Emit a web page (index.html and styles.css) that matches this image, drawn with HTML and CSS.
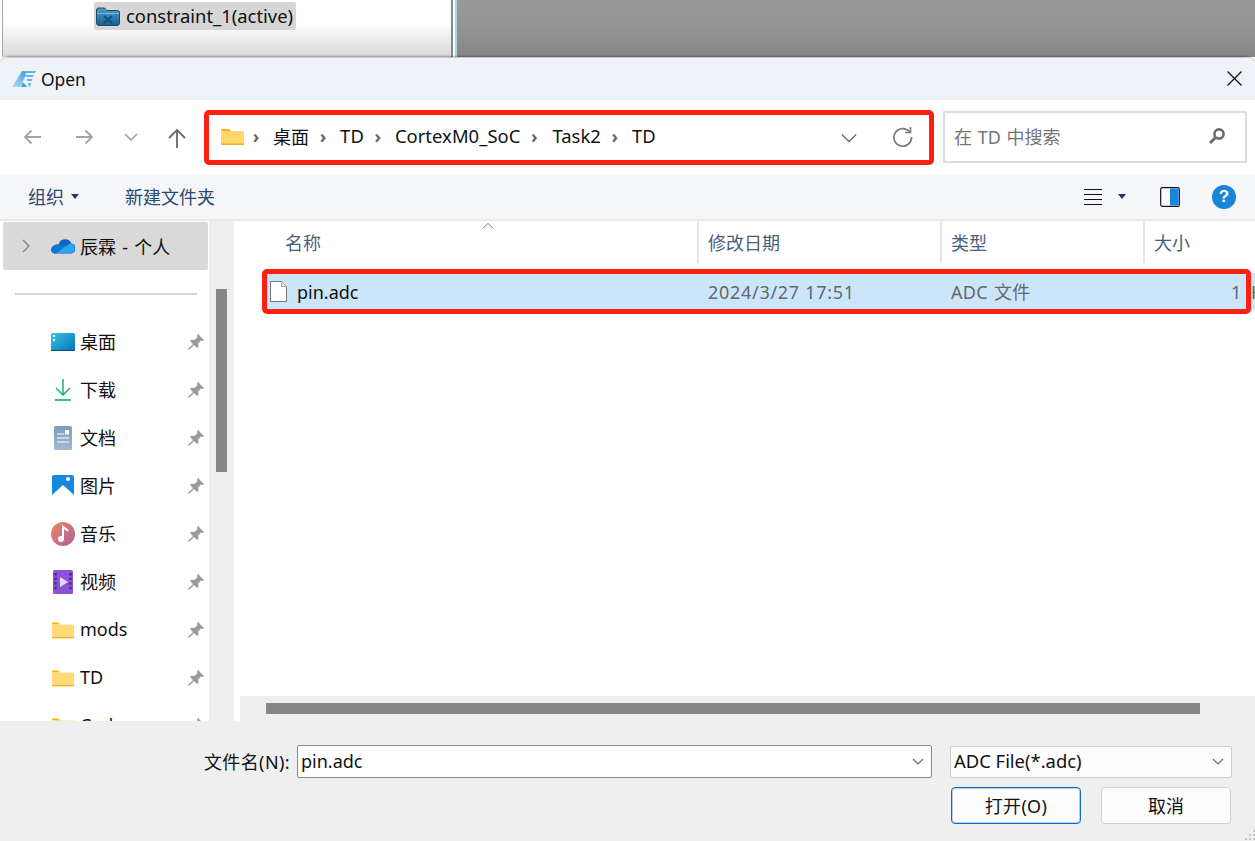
FILE: index.html
```html
<!DOCTYPE html>
<html lang="zh">
<head>
<meta charset="utf-8">
<title>Open</title>
<link rel="stylesheet" href="styles.css">
</head>
<body>
<div class="backdrop">
  <div class="tree">
    <div class="tree-item">
      <svg class="ico-constraint" viewBox="0 0 24 19"><defs><linearGradient id="cg" x1="0" y1="0" x2="0" y2="1"><stop offset="0" stop-color="#4f9ccb"/><stop offset="1" stop-color="#15608f"/></linearGradient></defs><path d="M.5 3a2 2 0 0 1 2-2h6l2.500 2.500h10.500a2 2 0 0 1 2 2V16a2.500 2.500 0 0 1-2.500 2.500H3A2.500 2.500 0 0 1 .5 16z" fill="url(#cg)" stroke="#234a66"/><path d="M1 6.500h22" stroke="#7db9dd"/><path d="M8 9l8 7M16 9l-8 7" stroke="#114f7c" stroke-width="1.800"/></svg>
      <span class="lat">constraint_1(active)</span>
    </div>
  </div>
  <div class="tree-edge"></div>
  <div class="work"></div>
</div>
<div class="dialog">
  <header class="titlebar">
    <svg class="app-logo" viewBox="0 0 24 17"><defs><linearGradient id="lg" x1="0" y1="1" x2="1" y2="0"><stop offset="0" stop-color="#b5def6"/><stop offset="1" stop-color="#3f9fdc"/></linearGradient></defs><path d="M0 17L10 1h3l1 4-6 12z" fill="url(#lg)"/><path d="M11 12l4 5h-6z" fill="#3f9fdc"/><path d="M12 1h12l-1 2H13zM14 5h8l-1 2h-6.500zM15 9h5.500l-1 2H15.500zM16 13h3l-1 4h-1z" fill="#62b2e6"/></svg>
    <span class="title">Open</span>
    <svg class="close" viewBox="0 0 15 15"><path d="M.5.5l14 14M14.500.5l-14 14" stroke="#111" stroke-width="1.300" fill="none"/></svg>
  </header>
  <nav class="navbar">
    <div class="nav-btns">
      <svg class="nav-ico" viewBox="0 0 18 16"><path d="M18 8H2M8.500 1.500L2 8l6.500 6.500" stroke="#a3a3a3" stroke-width="1.800" fill="none"/></svg>
      <svg class="nav-ico" viewBox="0 0 18 16"><path d="M0 8h16M9.500 1.500L16 8l-6.500 6.500" stroke="#a3a3a3" stroke-width="1.800" fill="none"/></svg>
      <svg class="nav-down" viewBox="0 0 14 8"><path d="M1 1l6 6 6-6" stroke="#a3a3a3" stroke-width="1.700" fill="none"/></svg>
      <svg class="nav-up" viewBox="0 0 18 20"><path d="M9 20V2M1 10l8-8 8 8" stroke="#6f6f6f" stroke-width="1.900" fill="none"/></svg>
    </div>
    <div class="address">
      <svg class="crumb-folder" viewBox="0 0 23 17"><path d="M0 2a1 1 0 0 1 1-1h7l2 2H0z" fill="#f5b316"/><path d="M0 3h22a1 1 0 0 1 1 1v12a1 1 0 0 1-1 1H1a1 1 0 0 1-1-1z" fill="#fdd768"/><path d="M0 15.500h23v.5a1 1 0 0 1-1 1H1a1 1 0 0 1-1-1z" fill="#eeb02c"/></svg>
      <span class="sep">›</span><span class="crumb">桌面</span>
      <span class="sep">›</span><span class="crumb lat">TD</span>
      <span class="sep">›</span><span class="crumb lat">CortexM0_SoC</span>
      <span class="sep">›</span><span class="crumb lat">Task2</span>
      <span class="sep">›</span><span class="crumb lat">TD</span>
      <svg class="addr-down" viewBox="0 0 18 10"><path d="M1 1l8 8 8-8" stroke="#6a6a6a" stroke-width="1.400" fill="none"/></svg>
      <svg class="refresh" viewBox="0 0 21 20"><path d="M17.500 4.800A8.800 8.800 0 1 0 19.500 10" stroke="#7b7b7b" stroke-width="1.700" fill="none"/><path d="M18.500 0v5.500H13" stroke="#7b7b7b" stroke-width="1.700" fill="none"/></svg>
    </div>
    <div class="search">
      <span class="placeholder">在 TD 中搜索</span>
      <svg class="search-ico" viewBox="0 0 18 18"><circle cx="11" cy="7" r="4.600" fill="none" stroke="#6c6c6c" stroke-width="2.600"/><path d="M7.500 10.500L2 16" stroke="#6c6c6c" stroke-width="3"/></svg>
    </div>
  </nav>
  <div class="toolbar">
    <span class="tool">组织</span><span class="caret"></span>
    <span class="tool new">新建文件夹</span>
    <div class="tool-right">
      <svg class="view-ico" viewBox="0 0 18 16" shape-rendering="crispEdges"><path d="M0 .5h18M0 5.500h18M0 10.500h18M0 15.500h18" stroke="#111" stroke-width="1"/></svg>
      <span class="caret"></span>
      <svg class="pane-ico" viewBox="0 0 20 20"><rect x=".7" y=".7" width="18.600" height="18.600" rx="1.500" fill="#fff" stroke="#111" stroke-width="1.200"/><rect x="10" y="1.500" width="8.600" height="17" fill="#1a86d8"/></svg>
      <div class="help">?</div>
    </div>
  </div>
  <main class="main">
    <aside class="sidebar">
      <div class="onedrive">
        <svg class="chev" viewBox="0 0 8 14"><path d="M1 1l6 6-6 6" stroke="#8a8a8a" stroke-width="1.500" fill="none"/></svg>
        <svg class="ico" viewBox="0 0 24 16"><path d="M7.500 6.800a6.800 6.800 0 0 1 13-1.200 5 5 0 0 1-1 9.900H4a4 4 0 0 1-1-7.800 5 5 0 0 1 4.500-.9z" fill="#0f66bb"/><path d="M4.500 15.500L14 8.500l5.500-2.900a5 5 0 0 1 0 9.900z" fill="#2ea5ec"/><path d="M3 7.700a5 5 0 0 1 4.500-.9L14 8.500 4.500 15.500H4a4 4 0 0 1-1-7.800z" fill="#0c78d2"/></svg>
        <span>辰霖 - 个人</span>
      </div>
      <hr class="divider">
      <ul class="places">
        <li><svg class="ico" viewBox="0 0 24 18"><defs><linearGradient id="dg" x1="0" y1="0" x2="1" y2="1"><stop offset="0" stop-color="#35c6de"/><stop offset="1" stop-color="#0a70b8"/></linearGradient></defs><rect width="24" height="18" rx="1.500" fill="url(#dg)"/><rect y="17" width="24" height="1" fill="#124b7a"/><rect x="2" y="2" width="2" height="2" fill="#fff"/><rect x="2" y="6" width="2" height="2" fill="#dff"/></svg><span>桌面</span><svg class="pin" viewBox="0 0 16 16"><use href="#pin"/></svg></li>
        <li><svg class="ico" viewBox="0 0 24 22"><path d="M12 0v16M5 9l7 7 7-7" stroke="#27b38c" stroke-width="1.600" fill="none"/><path d="M4 21h16" stroke="#27b38c" stroke-width="1.800"/></svg><span>下载</span><svg class="pin" viewBox="0 0 16 16"><use href="#pin"/></svg></li>
        <li><svg class="ico" viewBox="0 0 24 24"><defs><linearGradient id="fg" x1="0" y1="0" x2="0" y2="1"><stop offset="0" stop-color="#7f9cc0"/><stop offset="1" stop-color="#a4b9d2"/></linearGradient></defs><rect x="3" y="0" width="18" height="24" rx="1.500" fill="url(#fg)"/><path d="M6 8h7M6 12h12M6 16h12" stroke="#fff" stroke-width="1.200"/><rect x="14" y="4" width="4" height="4.500" fill="#fff"/></svg><span>文档</span><svg class="pin" viewBox="0 0 16 16"><use href="#pin"/></svg></li>
        <li><svg class="ico" viewBox="0 0 24 24"><rect x="1" y="1" width="22" height="22" rx="2" fill="#1689dc"/><path d="M1 21L12 11l11 10v2H1z" fill="#fff"/><circle cx="17" cy="5" r="2" fill="#fff"/></svg><span>图片</span><svg class="pin" viewBox="0 0 16 16"><use href="#pin"/></svg></li>
        <li><svg class="ico" viewBox="0 0 24 24"><defs><linearGradient id="mg" x1="0" y1="0" x2="1" y2="1"><stop offset="0" stop-color="#f0885e"/><stop offset="1" stop-color="#a860a0"/></linearGradient></defs><circle cx="12" cy="12" r="12" fill="url(#mg)"/><circle cx="10" cy="17" r="3" fill="#fff"/><path d="M12 17V5c2 2 4 2 5 4" stroke="#fff" stroke-width="2" fill="none"/></svg><span>音乐</span><svg class="pin" viewBox="0 0 16 16"><use href="#pin"/></svg></li>
        <li><svg class="ico" viewBox="0 0 24 24"><rect x="2" y="0" width="20" height="24" rx="1.500" fill="#8a52d6"/><path d="M9 7l8 5-8 5z" fill="#e6dcf8"/><path d="M4.500 3v18M19.500 3v18" stroke="#4a2a80" stroke-width="2.400" stroke-dasharray="2.400 2.200"/></svg><span>视频</span><svg class="pin" viewBox="0 0 16 16"><use href="#pin"/></svg></li>
        <li><svg class="ico" viewBox="-1 0 26 18"><use href="#folder"/></svg><span>mods</span><svg class="pin" viewBox="0 0 16 16"><use href="#pin"/></svg></li>
        <li><svg class="ico" viewBox="-1 0 26 18"><use href="#folder"/></svg><span>TD</span><svg class="pin" viewBox="0 0 16 16"><use href="#pin"/></svg></li>
        <li><svg class="ico" viewBox="-1 0 26 18"><use href="#folder"/></svg><span>Code</span><svg class="pin" viewBox="0 0 16 16"><use href="#pin"/></svg></li>
      </ul>
    </aside>
    <div class="vscroll"><div class="vthumb"></div></div>
    <section class="list">
      <div class="list-body">
        <div class="cols">
          <div class="col c-name">名称<svg class="sort" viewBox="0 0 12 6"><path d="M.5 5.500L6 .5l5.500 5" stroke="#7a7a7a" fill="none"/></svg></div>
          <div class="col c-date">修改日期</div>
          <div class="col c-type">类型</div>
          <div class="col c-size">大小</div>
        </div>
        <div class="row">
          <div class="cell name-cell"><svg class="file-ico" viewBox="0 0 17 21"><path d="M.5.5h11l5 5v15H.5z" fill="#fff" stroke="#767676"/><path d="M11.500.5v5h5" fill="#eee" stroke="#a0a0a0"/></svg>pin.adc</div>
          <div class="cell date-cell dim">2024/3/27 17:51</div>
          <div class="cell type-cell dim">ADC 文件</div>
          <div class="cell size-cell dim">1 KB</div>
          <div class="row-mark"></div>
        </div>
      </div>
      <div class="hscroll"><div class="hthumb"></div></div>
    </section>
  </main>
  <footer class="footer">
    <div class="field-row">
      <label class="fname-label">文件名(N):</label>
      <div class="combo fname"><span>pin.adc</span><svg class="combo-down" viewBox="0 0 12 7"><path d="M1 1l5 5 5-5" stroke="#6a6a6a" stroke-width="1.100" fill="none"/></svg></div>
      <div class="combo ftype"><span class="lat">ADC File(*.adc)</span><svg class="combo-down" viewBox="0 0 12 7"><path d="M1 1l5 5 5-5" stroke="#6a6a6a" stroke-width="1.100" fill="none"/></svg></div>
    </div>
    <div class="btn-row">
      <button class="btn primary">打开(O)</button>
      <button class="btn">取消</button>
    </div>
    <svg class="grip" viewBox="0 0 10 11" shape-rendering="crispEdges"><path d="M8 0h2v2H8zM8 4h2v2H8zM4 4h2v2H4zM8 8h2v2H8zM4 8h2v2H4zM0 8h2v2H0z" fill="#c4c4c4"/></svg>
  </footer>
</div>
<svg class="defs" width="0" height="0">
  <defs>
    <g id="pin"><path d="M10 0l6 6-1.500 1-1.500-.5-3 3 .5 3L9 14l-3-3-5 5-1-1 5-5-3-3 1.500-1.500 3 .5 3-3L9 1.500z" fill="#959ca3"/></g>
    <g id="folder"><path d="M0 2a1 1 0 0 1 1-1h6l2 2H0z" fill="#f5b316"/><path d="M0 3h23a1 1 0 0 1 1 1v13a1 1 0 0 1-1 1H1a1 1 0 0 1-1-1z" fill="#fedb78"/><path d="M0 16.500h24v.5a1 1 0 0 1-1 1H1a1 1 0 0 1-1-1z" fill="#eeb02c"/></g>
  </defs>
</svg>
</body>
</html>
```
FILE: styles.css
```css
* { box-sizing: border-box; }
html, body { margin: 0; padding: 0; }
body {
  width: 1255px;
  height: 841px;
  overflow: hidden;
  display: flex;
  flex-direction: column;
  font-family: "Noto Sans", "Noto Sans CJK SC", sans-serif;
  font-size: 18px;
  color: #111;
  background: #fff;
}
.defs { display: block; height: 0; }
.lat { font-size: 18.4px; }

/* window behind the dialog */
.backdrop { height: 57px; flex: none; display: flex; }
.tree {
  width: 451px;
  margin-left: 2px;
  border-left: 1px solid #a9a9a9;
  border-right: 2px solid #858a90;
  background: linear-gradient(#fff 0, #fff 22px, #d9d9d9 57px);
  padding: 2px 0 0 91px;
}
.tree-item {
  display: inline-flex;
  align-items: center;
  height: 28px;
  padding: 0 3px 0 2px;
  gap: 6px;
  background: #d6d6d6;
  border-radius: 2px;
  line-height: 28px;
}
.ico-constraint { width: 24px; height: 19px; }
.tree-edge { width: 4px; background: linear-gradient(90deg, #fff 0, #fff 50%, #a9d6e2 50%, #a9d6e2 100%); }
.work { flex: 1; background: linear-gradient(#9a9a9a 0, #939393 30px, #868686 57px); }

/* dialog */
.dialog {
  flex: 1;
  display: flex;
  flex-direction: column;
  border-radius: 9px 9px 0 0;
  overflow: hidden;
  box-shadow: 0 -1px 2px rgba(0,0,0,.3);
  position: relative;
}
.titlebar {
  height: 43px;
  flex: none;
  background: #eef3f8;
  display: flex;
  align-items: center;
  padding: 0 13px 1px 12px;
  border-top: 1px solid #c4c8cc;
}
.app-logo { width: 24px; height: 17px; }
.title { margin-left: 5px; font-size: 17.4px; }
.close { width: 15px; height: 15px; margin-left: auto; }

.navbar {
  height: 74px;
  flex: none;
  background: #fff;
  display: flex;
  align-items: center;
  padding: 0 8px 0 23px;
}
.nav-btns { display: flex; align-items: center; width: 181px; }
.nav-ico { width: 18px; height: 16px; margin-right: 35px; margin-top: -1px; }
.nav-ico + .nav-ico { margin-right: 30px; }
.nav-down { width: 14px; height: 8px; margin-right: 30px; margin-top: -1px; }
.nav-up { width: 18px; height: 20px; margin-top: 1px; }
.address {
  width: 730px;
  height: 55px;
  border: 5px solid #fb2012;
  border-radius: 5px;
  display: flex;
  align-items: center;
  padding: 0 16px 3px 12px;
}
.crumb-folder { width: 23px; height: 17px; margin-top: 1px; }
.sep { color: #666; width: 24px; text-align: center; font-size: 18px; font-weight: 700; line-height: 1; flex: none; }
.crumb { margin-right: 2px; white-space: nowrap; padding-left: 5px; letter-spacing: .05px; }
.crumb + .sep + .crumb + .sep + .crumb + .sep + .crumb { margin-left: 1px; }
.crumb + .sep + .crumb + .sep + .crumb + .sep + .crumb + .sep + .crumb { margin-left: 0; }
.addr-down { width: 16px; height: 10px; margin-left: auto; margin-top: 4px; }
.refresh { width: 21px; height: 20px; margin-left: 35px; margin-top: 3px; }
.search {
  width: 304px;
  height: 52px;
  margin-left: 9px;
  border: 2px solid #dcdcdc;
  display: flex;
  align-items: center;
  padding: 0 19px 2px 9px;
}
.placeholder { color: #757575; word-spacing: 1px; }
.search-ico { width: 18px; height: 18px; margin-left: auto; }

.toolbar {
  height: 47px;
  flex: none;
  background: #f4f6f9;
  border-bottom: 2px solid #e8e8e8;
  display: flex;
  align-items: center;
  padding: 0 19px 0 28px;
  color: #2a4a6b;
}
.tool { white-space: nowrap; padding-bottom: 2px; }
.new { margin-left: 46px; }
.caret {
  width: 0;
  height: 0;
  border: 4px solid transparent;
  border-top: 5px solid #1f3a5f;
  border-bottom: 0;
  margin-left: 7px;
}
.tool-right { margin-left: auto; display: flex; align-items: center; }
.view-ico { width: 18px; height: 16px; }
.tool-right .caret { margin-left: 16px; }
.pane-ico { width: 20px; height: 20px; margin-left: 34px; }
.help {
  width: 24px;
  height: 24px;
  margin-left: 32px;
  border-radius: 50%;
  background: #1886d8;
  color: #fff;
  font: 700 17px/24px "Liberation Sans", sans-serif;
  text-align: center;
}

.main { flex: 1; min-height: 0; display: flex; background: #fff; }
.sidebar { width: 209px; flex: none; overflow: hidden; padding-top: 1px; }
.onedrive {
  height: 48px;
  margin: 0 1px 0 3px;
  background: #d9d9d9;
  border-radius: 2px;
  display: flex;
  align-items: center;
  padding-left: 19px;
}
.chev { width: 8px; height: 14px; margin-right: 21px; }
.ico { width: 24px; height: 24px; flex: none; }
.onedrive .ico { height: 16px; }
.onedrive span { margin-left: 5px; white-space: nowrap; word-spacing: 1.500px; }
.divider { border: 0; height: 2px; background: #d4d4d4; margin: 23px 12px 0 15px; }
.places { list-style: none; margin: 23px 0 0; padding: 0 5px 0 51px; }
.places li { height: 48px; display: flex; align-items: center; }
.places li span { margin-left: 5px; padding-bottom: 2px; }
.pin { width: 16px; height: 16px; margin-left: auto; }
.vscroll { width: 25px; flex: none; background: #eee; padding: 68px 7px 0; }
.vthumb { height: 183px; background: #868686; }

.list { flex: 1; min-width: 0; margin-left: 6px; display: flex; flex-direction: column; }
.list-body { flex: 1; overflow: hidden; }
.cols { height: 42px; display: flex; color: #4a6078; }
.col { padding-left: 9px; border-right: 2px solid #e6e6e6; line-height: 44px; position: relative; flex: none; }
.col.c-name { width: 459px; padding-left: 45px; }
.c-date { width: 243px; }
.c-type { width: 203px; }
.c-size { width: 110px; border-right: 0; }
.sort { position: absolute; left: 242px; top: 2px; width: 12px; height: 6px; }
.row {
  height: 37px;
  margin: 10px 0 0 26px;
  background: #cbe6fb;
  display: flex;
  align-items: center;
  position: relative;
  white-space: nowrap;
}
.row-mark {
  position: absolute;
  left: -4px;
  top: -4px;
  width: 989px;
  height: 45px;
  border: 5px solid #fb2012;
  border-radius: 5px;
}
.cell { flex: none; padding-left: 9px; }
.name-cell { display: flex; align-items: center; width: 433px; padding-left: 4px; }
.file-ico { width: 17px; height: 21px; margin-right: 10px; }
.date-cell { width: 243px; letter-spacing: .7px; }
.type-cell { width: 203px; word-spacing: 1px; letter-spacing: .3px; padding-bottom: 1px; }
.size-cell { padding-left: 86px; word-spacing: 5px; }
.dim { color: #666; }
.hscroll { height: 25px; flex: none; background: #eee; padding: 7px 55px 0 26px; }
.hthumb { height: 11px; background: #868686; }

.footer {
  height: 120px;
  flex: none;
  background: #efefef;
  padding: 24px 23px 0 0;
  position: relative;
}
.field-row { display: flex; align-items: center; justify-content: flex-end; }
.fname-label { margin-right: 7px; white-space: nowrap; letter-spacing: .4px; padding-bottom: 2px; }
.combo {
  height: 33px;
  background: #fff;
  border: 1px solid #cfcfcf;
  border-radius: 2px;
  display: flex;
  align-items: center;
  padding: 0 7px 2px 4px;
}
.fname { width: 635px; border-color: #8a8a8a; padding-left: 3px; }
.ftype { width: 282px; margin-left: 18px; height: 32px; background: #fdfdfd; padding-left: 3px; }
.combo-down { width: 12px; height: 7px; margin-left: auto; margin-top: 2px; }
.btn-row { display: flex; justify-content: flex-end; gap: 20px; margin-top: 9px; padding-right: 1px; }
.btn {
  width: 130px;
  height: 37px;
  background: #fdfdfd;
  border: 1px solid #d0d0d0;
  border-radius: 4px;
  font: inherit;
  color: #111;
  padding: 0 0 2px;
}
.primary { border-color: #0f6cbd; box-shadow: inset 0 0 0 1px rgba(15,108,189,.3); letter-spacing: .3px; }
.grip { position: absolute; right: 0; bottom: 0; width: 10px; height: 11px; }
```
